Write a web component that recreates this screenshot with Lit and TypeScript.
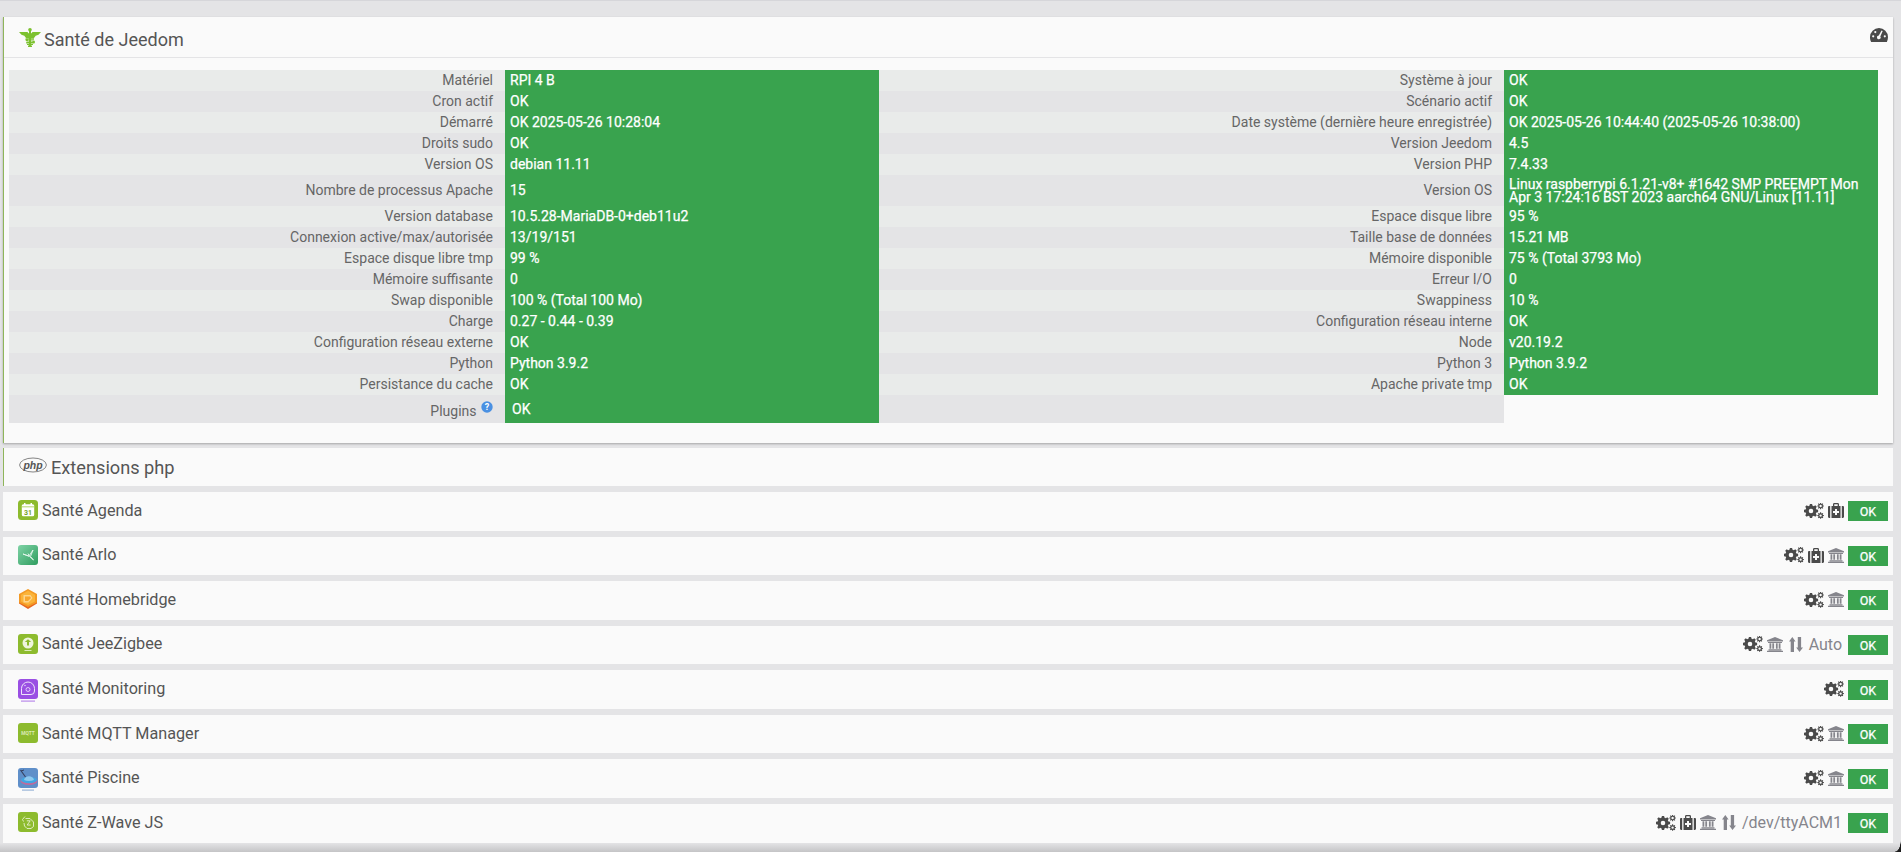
import { LitElement, html, css, svg } from "lit";
import { customElement } from "lit/decorators.js";

type Row = { a: string; b: string; c?: string; d?: string };
const rows: Row[] = [
  { a: "Matériel", b: "RPI 4 B", c: "Système à jour", d: "OK" },
  { a: "Cron actif", b: "OK", c: "Scénario actif", d: "OK" },
  { a: "Démarré", b: "OK 2025-05-26 10:28:04", c: "Date système (dernière heure enregistrée)", d: "OK 2025-05-26 10:44:40 (2025-05-26 10:38:00)" },
  { a: "Droits sudo", b: "OK", c: "Version Jeedom", d: "4.5" },
  { a: "Version OS", b: "debian 11.11", c: "Version PHP", d: "7.4.33" },
  { a: "Nombre de processus Apache", b: "15", c: "Version OS", d: "Linux raspberrypi 6.1.21-v8+ #1642 SMP PREEMPT Mon Apr 3 17:24:16 BST 2023 aarch64 GNU/Linux [11.11]" },
  { a: "Version database", b: "10.5.28-MariaDB-0+deb11u2", c: "Espace disque libre", d: "95 %" },
  { a: "Connexion active/max/autorisée", b: "13/19/151", c: "Taille base de données", d: "15.21 MB" },
  { a: "Espace disque libre tmp", b: "99 %", c: "Mémoire disponible", d: "75 % (Total 3793 Mo)" },
  { a: "Mémoire suffisante", b: "0", c: "Erreur I/O", d: "0" },
  { a: "Swap disponible", b: "100 % (Total 100 Mo)", c: "Swappiness", d: "10 %" },
  { a: "Charge", b: "0.27 - 0.44 - 0.39", c: "Configuration réseau interne", d: "OK" },
  { a: "Configuration réseau externe", b: "OK", c: "Node", d: "v20.19.2" },
  { a: "Python", b: "Python 3.9.2", c: "Python 3", d: "Python 3.9.2" },
  { a: "Persistance du cache", b: "OK", c: "Apache private tmp", d: "OK" },
];

function gearPath(cx: number, cy: number, ro: number, ri: number, n: number, hole: number): string {
  const pts: string[] = [];
  const step = (Math.PI * 2) / n;
  for (let i = 0; i < n; i++) {
    const a = i * step;
    const w = step * 0.2;
    const list: [number, number][] = [
      [ri, a - step * 0.32],
      [ro, a - w],
      [ro, a + w],
      [ri, a + step * 0.32],
    ];
    for (const [r, t] of list) {
      pts.push(`${(cx + r * Math.cos(t)).toFixed(2)} ${(cy + r * Math.sin(t)).toFixed(2)}`);
    }
  }
  const h = `M${(cx + hole).toFixed(2)} ${cy}a${hole} ${hole} 0 1 0 ${-2 * hole} 0a${hole} ${hole} 0 1 0 ${2 * hole} 0z`;
  return `M${pts.join("L")}z${h}`;
}

const gearD = gearPath(7, 8, 7.2, 5.6, 8, 2.3) + gearPath(16.6, 3, 3.3, 2.4, 8, 1.2) + gearPath(16.6, 12.6, 3.3, 2.4, 8, 1.2);
const gears = svg`<svg class="ic" width="20" height="16" viewBox="0 0 20 16" fill="#4a4a4a">
  <path fill-rule="evenodd" d=${gearD}/>
</svg>`;

const medkit = svg`<svg class="ic" width="16" height="15" viewBox="0 0 16 15" fill="#4a4a4a">
  <path fill-rule="evenodd" d="M5 3V1.300C5 .6 5.600 0 6.300 0h3.400c.7 0 1.300.6 1.300 1.300V3h1.500v12H3.500V3zm1.300 0h3.400V1.300H6.300zM7 6v2H5v2h2v2h2v-2h2V8H9V6z"/>
  <path d="M0 4.200C0 3.500.5 3 1.200 3h1v12h-1C.5 15 0 14.500 0 13.800zM13.800 3h1C15.500 3 16 3.500 16 4.200v9.600c0 .7-.5 1.200-1.200 1.200h-1z"/>
</svg>`;

const bank = svg`<svg class="ic" width="16" height="15" viewBox="0 0 16 15" fill="#85858c">
  <path d="M8 0l8 3.200V4.500H0V3.200z"/>
  <path d="M1 5h14v1H1zM2.500 6.300h1.800v5.500H2.500zM5.300 6.300h1.800v5.500H5.300zM8.900 6.300h1.800v5.500H8.900zM11.700 6.300h1.800v5.500h-1.800zM1.500 12.200h13v1.200h-13zM0 13.800h16V15H0z"/>
</svg>`;

const arrows = svg`<svg class="ic arrows" width="14" height="15" viewBox="0 0 14 15" fill="#85858c">
  <path d="M3.300 0L6.600 4.500H5v10.500H1.700V4.500H0zM8.800 0h3.300v10.500H14L10.500 15 7.200 10.500h1.600z"/>
</svg>`;

const agenda = svg`<svg viewBox="0 0 20 20" width="20" height="20">
  <rect width="20" height="20" rx="3.500" fill="#8dbb2e"/>
  <rect x="3.800" y="4.200" width="12.400" height="12" rx="1.500" fill="#fff"/>
  <rect x="6" y="3" width="1.500" height="2.500" fill="#fff"/><rect x="12.500" y="3" width="1.500" height="2.500" fill="#fff"/>
  <rect x="3.800" y="6.400" width="12.400" height=".9" fill="#a9cf5a"/>
  <text x="10" y="14.600" text-anchor="middle" font-family="Roboto, sans-serif" font-size="7" font-weight="700" fill="#76a41f">31</text>
</svg>`;
const arlo = svg`<svg viewBox="0 0 20 20" width="20" height="20">
  <defs><linearGradient id="ag" x1="0" y1="0" x2="1" y2="1"><stop offset="0" stop-color="#7fd3a6"/><stop offset="1" stop-color="#2f9d5f"/></linearGradient></defs>
  <rect width="20" height="20" rx="3" fill="url(#ag)"/>
  <path d="M5 9l6 2 4-6-2.500 6.500L15.500 15l-4-3.500zM10 8.500l1 2" fill="none" stroke="#e8f7ef" stroke-width=".9"/>
</svg>`;
const homebridge = svg`<svg viewBox="0 0 20 20" width="20" height="20">
  <path d="M10 14.500L1 10v4.500L10 20l9-5.500V10z" fill="#e8661f"/>
  <path d="M10 0L1 5v8.500L10 18l9-4.500V5z" fill="#f39a25"/>
  <path d="M10 1.800L3 5.800v6.600L10 16l7-3.600V5.800z" fill="#fbb43a"/>
  <path d="M5.500 6h7l2 3-4 4.500h-5z" fill="#fdd58c"/>
  <path d="M7 7.500h5l1 1.500-3 3H7z" fill="#f8a62d"/>
</svg>`;
const zigbee = svg`<svg viewBox="0 0 20 20" width="20" height="20">
  <rect width="20" height="20" rx="3" fill="#8dbb2e"/>
  <circle cx="10" cy="9" r="5.500" fill="#eef5dc"/>
  <path d="M6.800 8L10 5.300 13.200 8H11v3.500H9V8z" fill="#8dbb2e"/>
  <rect x="6.500" y="16" width="7" height="1" fill="#dcebb8"/>
</svg>`;
const monitoring = svg`<svg viewBox="0 0 20 23" width="20" height="23">
  <rect width="20" height="20" rx="3" fill="#9a4fe3"/>
  <path d="M3.500 15.500V9.500a6.500 6.500 0 0 1 13 0v2.500a3.500 3.500 0 0 1-3.500 3.500z" fill="none" stroke="#f0e4fb" stroke-width="1"/>
  <circle cx="10" cy="10.500" r="2" fill="none" stroke="#f0e4fb" stroke-width=".8"/>
  <circle cx="7" cy="6.500" r=".7" fill="#f0e4fb"/>
  <rect x="3" y="21.500" width="14" height="1.200" fill="#b98aea"/>
</svg>`;
const mqtt = svg`<svg viewBox="0 0 20 20" width="20" height="20">
  <rect width="20" height="20" rx="3" fill="#8dbb2e"/>
  <text x="10" y="12" text-anchor="middle" font-family="Roboto, sans-serif" font-size="4.800" font-weight="700" fill="#dcebb8">MQTT</text>
</svg>`;
const piscine = svg`<svg viewBox="0 0 20 23" width="20" height="23">
  <rect width="20" height="20" rx="3" fill="#5f8fc9"/>
  <ellipse cx="11" cy="13" rx="8.500" ry="4" fill="#c06a9c"/>
  <ellipse cx="11" cy="12" rx="8" ry="3.200" fill="#3fa7e2"/>
  <path d="M16 12c-3 1.200-7 1.200-10 0 1-5 9-5 10 0z" fill="#8fc8ee"/>
  <path d="M2.500 2l5 7" stroke="#36405f" stroke-width="1.100"/>
  <path d="M3 3l3-1" stroke="#36405f" stroke-width="1"/>
  <rect x="4" y="21.500" width="12" height="1.200" fill="#9bb6d8"/>
</svg>`;
const zwave = svg`<svg viewBox="0 0 20 20" width="20" height="20">
  <rect width="20" height="20" rx="3" fill="#8dbb2e"/>
  <path d="M7 4.500L4.500 7.500l1 2M7.500 6.500H12l3.500 3.500v4.500L13 16.500H9L6.500 14l-.5-3" fill="none" stroke="#e8f2cf" stroke-width=".9"/>
  <path d="M8.800 8.800h3.400l-3 4.200h3.400" fill="none" stroke="#e8f2cf" stroke-width=".9"/>
</svg>`;

const caduceus = svg`<svg width="22" height="19" viewBox="0 0 22 19" fill="#7cc12f">
  <circle cx="11" cy="1.800" r="1.800"/>
  <path d="M0 4h8.500l1 1.300h3l1-1.300H22l-2.500 2.800-2.800 1-1.700 2.200H7L5.300 7.800l-2.800-1z"/>
  <rect x="10" y="3" width="2" height="16"/>
  <path d="M6.800 10.200h8.200v1.500H9.200v.7h5.800c1.200.5 1.300 2.500.2 3H7.200V14h6.300v-.6H8c-1.700-.3-1.900-2.300-1.200-3.200z"/>
  <path d="M8 16h6v1.100H8zM9 17.500h4V19H9z"/>
</svg>`;

const gauge = svg`<svg width="18" height="14" viewBox="0 0 18 14" fill="#4a4a4a">
  <path fill-rule="evenodd" d="M9 0a9 9 0 0 1 9 9c0 1.800-.4 3.500-1.100 5H1.100A10 10 0 0 1 0 9a9 9 0 0 1 9-9zM3.200 7.200a1.100 1.100 0 1 0 0 2.200 1.100 1.100 0 0 0 0-2.200zM5.300 3a1.100 1.100 0 1 0 0 2.200 1.100 1.100 0 0 0 0-2.200zM14.800 7.200a1.100 1.100 0 1 0 0 2.200 1.100 1.100 0 0 0 0-2.200zM11.500 2.500L8.800 7.600a1.800 1.800 0 1 0 1.500.8l2.400-5.400z"/>
</svg>`;

const phpLogo = svg`<svg width="28" height="16" viewBox="0 0 28 16">
  <ellipse cx="14" cy="8" rx="13.400" ry="7" fill="none" stroke="#666" stroke-width=".8"/>
  <text x="14" y="11.500" text-anchor="middle" font-family="Liberation Sans, sans-serif" font-size="10.500" font-style="italic" font-weight="700" fill="#555">php</text>
</svg>`;

const help = svg`<svg width="12" height="12" viewBox="0 0 12 12">
  <circle cx="6" cy="6" r="5.700" fill="#4a90e2"/>
  <text x="6" y="9" text-anchor="middle" font-family="Roboto, sans-serif" font-size="9" font-weight="700" fill="#fff">?</text>
</svg>`;

const plugins = [
  { name: "Santé Agenda", icon: agenda, tools: [gears, medkit] },
  { name: "Santé Arlo", icon: arlo, tools: [gears, medkit, bank] },
  { name: "Santé Homebridge", icon: homebridge, tools: [gears, bank] },
  { name: "Santé JeeZigbee", icon: zigbee, tools: [gears, bank, arrows], port: "Auto" },
  { name: "Santé Monitoring", icon: monitoring, tools: [gears] },
  { name: "Santé MQTT Manager", icon: mqtt, tools: [gears, bank] },
  { name: "Santé Piscine", icon: piscine, tools: [gears, bank] },
  { name: "Santé Z-Wave JS", icon: zwave, tools: [gears, medkit, bank, arrows], port: "/dev/ttyACM1" },
];

@customElement("app-root")
export class AppRoot extends LitElement {
  static styles = css`
    :host {
      display: block;
      position: relative;
      height: 852px;
      overflow: hidden;
      box-sizing: border-box;
      background: linear-gradient(#e4e4e6 calc(100% - 9px), #c4c4c6 100%);
      border-top: 1px solid #d6d6da;
      padding: 16px 8px 0 3px;
      font-family: Roboto, "Liberation Sans", sans-serif;
      color: #555;
    }
    .corner {
      position: absolute;
      right: 0;
      bottom: 0;
      width: 6px;
      height: 12px;
      background: radial-gradient(ellipse 6px 12px at 0 0, transparent 92%, #1c1c1c 100%);
    }
    .main {
      background: #fafafa;
      border-left: 1px solid #8fb55a;
      box-shadow: 0 1px 2px rgba(0, 0, 0, 0.28);
      height: 426px;
      box-sizing: border-box;
    }
    .head {
      height: 41px;
      box-sizing: border-box;
      border-bottom: 1px solid #e4e4e6;
      display: flex;
      align-items: center;
      padding: 0 5px 0 15px;
      font-size: 18px;
      gap: 3px;
    }
    .head .t { flex: 1; padding-top: 5px; }
    .head svg { display: block; }
    .gauge { margin-top: -5px; }
    table {
      border-collapse: collapse;
      table-layout: fixed;
      width: 1869px;
      margin: 12px 0 0 5px;
      font-size: 14px;
      line-height: 13px;
    }
    td { padding: 0 5px; height: 21px; box-sizing: border-box; }
    tr:nth-child(odd) td.l { background: #e9ebea; }
    tr:nth-child(even) td.l { background: #e4e4e6; }
    td.l { text-align: right; color: #666; padding: 0 12px 0 0; }
    td.v {
      background: #39a34e;
      color: #fff;
      padding-left: 5px;
      padding-right: 4px;
      -webkit-text-stroke: 0.25px #fff;
    }
    tr.tall td { height: 31px; }
    tr.plug td { height: 28px; }
    tr.plug td.v { padding-left: 7px; }
    td.e { background: transparent; }
    .q { display: inline-block; vertical-align: 3px; margin-left: 1px; }
    .q svg { display: block; }
    .php {
      margin-top: 5px;
      height: 38px;
      background: #fafafa;
      border-left: 1px solid #8fb55a;
      display: flex;
      align-items: center;
      padding: 1px 0 0 15px;
      gap: 4px;
      font-size: 18.2px;
      box-sizing: border-box;
    }
    .php svg { display: block; margin-top: -5px; }
    .list { display: flex; flex-direction: column; margin-top: 6px; gap: 6px; }
    .row {
      height: 38.57px;
      background: #fafafa;
      display: flex;
      align-items: center;
      padding: 0 5px 0 15px;
      box-sizing: border-box;
      font-size: 16.2px;
    }
    .pi {
      width: 20px;
      height: 20px;
      margin-right: 4px;
      flex: none;
      margin-top: -2px;
    }
    .pi svg { display: block; overflow: visible; }
    .name { flex: 1; margin-top: -2px; }
    .tools { display: flex; align-items: center; gap: 4px; margin-top: -1px; margin-right: 4px; }
    .ic { display: block; }
    .arrows { margin-left: 2px; }
    .port { color: #85858c; font-size: 16px; margin-left: 2px; margin-right: 2px; }
    .ok {
      width: 40px;
      height: 20px;
      background: #39a34e;
      color: #fff;
      font-size: 12.5px;
      line-height: 21px;
      text-align: center;
      -webkit-text-stroke: 0.25px #fff;
    }
  `;

  render() {
    return html`
      <section class="main">
        <div class="head">
          ${caduceus}<span class="t">Santé de Jeedom</span>
          <span class="gauge">${gauge}</span>
        </div>
        <table>
          <colgroup>
            <col style="width:496px" /><col style="width:374px" /><col style="width:625px" /><col style="width:374px" />
          </colgroup>
          <tbody>
            ${rows.map(
              (r, i) => html`<tr class=${i === 5 ? "tall" : ""}>
                <td class="l">${r.a}</td><td class="v">${r.b}</td>
                <td class="l">${r.c}</td><td class="v">${r.d}</td>
              </tr>`
            )}
            <tr class="plug">
              <td class="l">Plugins <span class="q">${help}</span></td>
              <td class="v">OK</td>
              <td class="l"></td>
              <td class="e"></td>
            </tr>
          </tbody>
        </table>
      </section>
      <div class="php">${phpLogo}<span>Extensions php</span></div>
      <div class="list">
        ${plugins.map(
          (p) => html`<div class="row">
            <span class="pi">${p.icon}</span>
            <span class="name">${p.name}</span>
            <span class="tools">
              ${p.tools}
              ${p.port ? html`<span class="port">${p.port}</span>` : ""}
            </span>
            <span class="ok">OK</span>
          </div>`
        )}
      </div>
      <div class="corner"></div>
    `;
  }
}
